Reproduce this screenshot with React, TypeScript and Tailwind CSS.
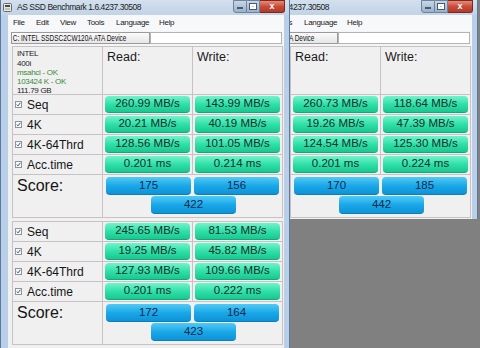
import type { ReactNode } from "react";

type Run = {
  read: string[];
  write: string[];
  score: [string, string, string];
};

const labels = ["Seq", "4K", "4K-64Thrd", "Acc.time"];

const runs: Run[] = [
  {
    read: ["260.99 MB/s", "20.21 MB/s", "128.56 MB/s", "0.201 ms"],
    write: ["143.99 MB/s", "40.19 MB/s", "101.05 MB/s", "0.214 ms"],
    score: ["175", "156", "422"],
  },
  {
    read: ["260.73 MB/s", "19.26 MB/s", "124.54 MB/s", "0.201 ms"],
    write: ["118.64 MB/s", "47.39 MB/s", "125.30 MB/s", "0.224 ms"],
    score: ["170", "185", "442"],
  },
  {
    read: ["245.65 MB/s", "19.25 MB/s", "127.93 MB/s", "0.201 ms"],
    write: ["81.53 MB/s", "45.82 MB/s", "109.66 MB/s", "0.222 ms"],
    score: ["172", "164", "423"],
  },
];

const menu = [
  { label: "File", w: "w-[23px]" },
  { label: "Edit", w: "w-[24px]" },
  { label: "View", w: "w-[27px]" },
  { label: "Tools", w: "w-[29px]" },
  { label: "Language", w: "w-[43px]" },
  { label: "Help", w: "w-[30px]" },
];

function GreenBox({ children }: { children: ReactNode }) {
  return (
    <div className="mx-[2px] mt-px h-[17px] rounded-[4px] border-b border-[#12a979] bg-linear-to-b from-[#6ff3cb] via-[#2fe1a9] to-[#19c88f] flex items-center justify-center text-[11.5px] leading-none text-[#15302a]">
      {children}
    </div>
  );
}

function BlueBox({ children, className = "" }: { children: ReactNode; className?: string }) {
  return (
    <div
      className={`w-[85px] h-[18px] rounded-[4px] border-b border-[#0a7fc0] bg-linear-to-b from-[#4fcaf5] via-[#1aa9e8] to-[#0e93d6] flex items-center justify-center text-[11.5px] leading-none text-[#0d2a52] ${className}`}
    >
      {children}
    </div>
  );
}

function Check() {
  return (
    <svg width="7" height="7" viewBox="0 0 7 7" className="shrink-0">
      <rect x="0.5" y="0.5" width="6" height="6" fill="#f4f6f8" stroke="#8f959c" />
      <path d="M1.8 3.6 L3 4.9 L5.3 1.8" fill="none" stroke="#3a4a5a" strokeWidth="0.9" />
    </svg>
  );
}

function ResultsTable({ run, header }: { run: Run; header: boolean }) {
  return (
    <div className="ml-[4px] w-[271px] grid grid-cols-[89px_89px_89px] gap-px p-px bg-[#c9c2c4] font-['Liberation_Sans',Arial,sans-serif]">
      {header && (
        <>
          <div className="h-[47px] bg-[#f0f0f0] pl-[4px] pt-[2px] text-[8px] leading-[9px] tracking-[-0.3px] text-[#222]">
            <div className="mb-[1px]">INTEL</div>
            <div>400i</div>
            <div className="text-[#3b8a3b]">msahci - OK</div>
            <div className="text-[#3b8a3b]">103424 K - OK</div>
            <div>111.79 GB</div>
          </div>
          <div className="h-[47px] bg-[#f0f0f0] pl-[4px] pt-[1px] text-[12.5px] text-[#1a1a1a]">Read:</div>
          <div className="h-[47px] bg-[#f0f0f0] pl-[4px] pt-[1px] text-[12.5px] text-[#1a1a1a]">Write:</div>
        </>
      )}
      {labels.map((label, i) => (
        <div key={label} className="contents">
          <div className="h-[19px] bg-[#f0f0f0] pl-[2px] flex items-center gap-[5px] text-[12px] text-[#151515]">
            <Check />
            <span>{label}</span>
          </div>
          <div className="h-[19px] bg-[#f0f0f0]">
            <GreenBox>{run.read[i]}</GreenBox>
          </div>
          <div className="h-[19px] bg-[#f0f0f0]">
            <GreenBox>{run.write[i]}</GreenBox>
          </div>
        </div>
      ))}
      <div className="h-[42px] bg-[#f0f0f0] pl-[4px] pt-[2px] text-[16px] leading-[18px] text-[#151515]">Score:</div>
      <div className="col-span-2 h-[42px] bg-[#f0f0f0] pt-[2px]">
        <div className="flex gap-[3px] pl-[3px]">
          <BlueBox>{run.score[0]}</BlueBox>
          <BlueBox>{run.score[1]}</BlueBox>
        </div>
        <BlueBox className="mt-px ml-[48px]">{run.score[2]}</BlueBox>
      </div>
    </div>
  );
}

function TitleBar() {
  return (
    <div className="h-[15px] flex items-start bg-linear-to-b from-[#d3e0ee] to-[#c2d3e6] font-['Liberation_Sans',Arial,sans-serif]">
      <svg width="9" height="9" viewBox="0 0 9 9" className="ml-[2px] mt-[3px] shrink-0">
        <rect x="0.5" y="0.5" width="8" height="8" rx="1" fill="#e8e8e8" stroke="#6b6b6b" />
        <rect x="2" y="2" width="5" height="2" fill="#4a4a4a" />
        <rect x="2" y="5.5" width="5" height="1" fill="#9a9a9a" />
      </svg>
      <span className="ml-[5px] mt-[2px] text-[8.5px] leading-[10px] tracking-[-0.45px] text-[#1c1c1c] whitespace-nowrap">
        AS SSD Benchmark 1.6.4237.30508
      </span>
      <div className="ml-auto mr-[4px] flex">
        <div className="w-[14px] h-[13px] rounded-bl-[3px] border border-[#6d829c] bg-linear-to-b from-[#c8d6e6] to-[#9cb1ca] flex items-end justify-center pb-[3px]">
          <div className="w-[6px] h-[2px] bg-white border border-[#4a5a6e]" />
        </div>
        <div className="w-[13px] h-[13px] border-y border-r border-[#6d829c] bg-linear-to-b from-[#c8d6e6] to-[#9cb1ca] flex items-center justify-center">
          <div className="w-[6px] h-[5px] border-2 border-white outline outline-[#4a5a6e] outline-1" />
        </div>
        <div className="w-[25px] h-[13px] rounded-br-[3px] border-y border-r border-[#7a2a22] bg-linear-to-b from-[#e58a78] via-[#c94c3a] to-[#b33a28] flex items-center justify-center text-[9px] font-bold leading-none text-white">
          x
        </div>
      </div>
    </div>
  );
}

function Window({ run }: { run: Run }) {
  return (
    <div className="w-[290px] h-[219px] border-x border-[#5a7aa2] bg-[#b8cfe7] flex flex-col">
      <TitleBar />
      <div className="ml-[7px] mr-[5px] flex-1 flex flex-col bg-[#f0f0f0] font-['Liberation_Sans',Arial,sans-serif]">
        <div className="h-[16px] flex items-center pl-[5px] bg-[#f7f8fa] text-[8px] tracking-[-0.3px] text-[#1a1a1a]">
          {menu.map((m) => (
            <span key={m.label} className={m.w}>
              {m.label}
            </span>
          ))}
        </div>
        <div className="h-[15px] flex pt-px pl-[3px] bg-[#f4f5f6]">
          <div className="w-[139px] h-[12px] border border-[#9a9a9a] bg-linear-to-b from-[#fbfbfb] to-[#e6e6e6] flex items-center overflow-hidden">
            <span className="inline-block pl-[1px] text-[8.5px] leading-none whitespace-nowrap origin-left scale-x-[0.76] text-[#111]">
              C: INTEL SSDSC2CW120A ATA Device
            </span>
            <span className="ml-auto mr-[4px] text-[6px] leading-none text-[#111]">▼</span>
          </div>
          <div className="w-[132px] h-[12px] border border-[#b4b4b4] bg-white" />
        </div>
        <ResultsTable run={run} header />
      </div>
    </div>
  );
}

function CroppedWindow({ run }: { run: Run }) {
  return (
    <div className="absolute left-0 top-[219px] w-[290px] h-[129px] overflow-hidden border-x border-[#5a7aa2] bg-[#b8cfe7] flex flex-col">
      <div className="ml-[7px] mr-[5px] flex-1 bg-[#f0f0f0] pt-[2px]">
        <ResultsTable run={run} header={false} />
      </div>
    </div>
  );
}

export default function App() {
  return (
    <div className="relative w-[480px] h-[348px] overflow-hidden bg-[#808080]">
      {/* second window, mostly hidden behind the first one */}
      <div className="absolute left-[290px] top-0 w-[190px] h-[219px] overflow-hidden">
        <div className="-ml-[102px]">
          <Window run={runs[1]} />
        </div>
      </div>
      <div className="absolute left-0 top-0">
        <Window run={runs[0]} />
      </div>
      <CroppedWindow run={runs[2]} />
    </div>
  );
}
